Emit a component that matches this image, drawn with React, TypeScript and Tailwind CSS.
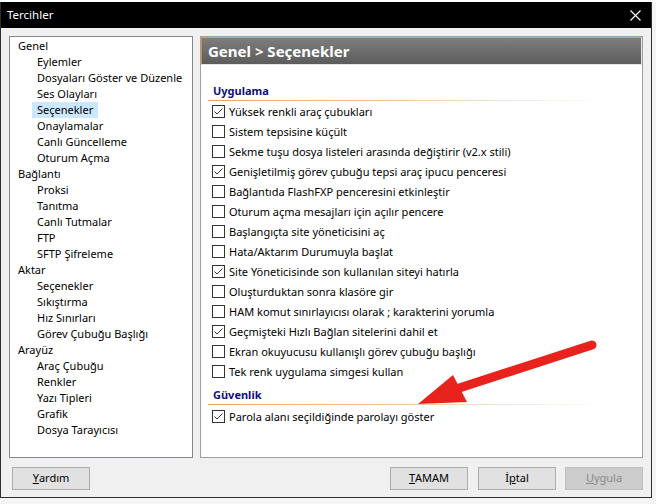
import React from "react";

const tree: { label: string; child?: boolean; active?: boolean }[] = [
  { label: "Genel" },
  { label: "Eylemler", child: true },
  { label: "Dosyaları Göster ve Düzenle", child: true },
  { label: "Ses Olayları", child: true },
  { label: "Seçenekler", child: true, active: true },
  { label: "Onaylamalar", child: true },
  { label: "Canlı Güncelleme", child: true },
  { label: "Oturum Açma", child: true },
  { label: "Bağlantı" },
  { label: "Proksi", child: true },
  { label: "Tanıtma", child: true },
  { label: "Canlı Tutmalar", child: true },
  { label: "FTP", child: true },
  { label: "SFTP Şifreleme", child: true },
  { label: "Aktar" },
  { label: "Seçenekler", child: true },
  { label: "Sıkıştırma", child: true },
  { label: "Hız Sınırları", child: true },
  { label: "Görev Çubuğu Başlığı", child: true },
  { label: "Arayüz" },
  { label: "Araç Çubuğu", child: true },
  { label: "Renkler", child: true },
  { label: "Yazı Tipleri", child: true },
  { label: "Grafik", child: true },
  { label: "Dosya Tarayıcısı", child: true },
];

const appOptions: [string, boolean][] = [
  ["Yüksek renkli araç çubukları", true],
  ["Sistem tepsisine küçült", false],
  ["Sekme tuşu dosya listeleri arasında değiştirir (v2.x stili)", false],
  ["Genişletilmiş görev çubuğu tepsi araç ipucu penceresi", true],
  ["Bağlantıda FlashFXP penceresini etkinleştir", false],
  ["Oturum açma mesajları için açılır pencere", false],
  ["Başlangıçta site yöneticisini aç", false],
  ["Hata/Aktarım Durumuyla başlat", false],
  ["Site Yöneticisinde son kullanılan siteyi hatırla", true],
  ["Oluşturduktan sonra klasöre gir", false],
  ["HAM komut sınırlayıcısı olarak ; karakterini yorumla", false],
  ["Geçmişteki Hızlı Bağlan sitelerini dahil et", true],
  ["Ekran okuyucusu kullanışlı görev çubuğu başlığı", false],
  ["Tek renk uygulama simgesi kullan", false],
];

function CheckBox({ checked }: { checked: boolean }) {
  return (
    <svg width="13" height="13" viewBox="0 0 13 13" className="shrink-0">
      <rect x="0.5" y="0.5" width="12" height="12" fill="#fff" stroke="#333" />
      {checked && (
        <polyline
          points="2.5,6.5 5,9 10.5,3.5"
          fill="none"
          stroke="#333"
          strokeWidth="1"
        />
      )}
    </svg>
  );
}

function Option({ label, checked }: { label: string; checked: boolean }) {
  return (
    <div className="flex h-[20px] items-center gap-[4px] whitespace-nowrap pl-[11px] text-[11px] text-black">
      <CheckBox checked={checked} />
      <span className="leading-none">{label}</span>
    </div>
  );
}

function SectionTitle({ label }: { label: string }) {
  return (
    <div>
      <div className="h-[16px] pl-[12px] text-[11px] font-bold leading-[16px] text-[#101080]">
        {label}
      </div>
      <div className="ml-[7px] mt-[1px] h-px w-[397px] bg-gradient-to-r from-[#eea25a] via-[#f3c9a0] to-transparent" />
    </div>
  );
}

function Button({
  children,
  disabled,
  className = "",
}: {
  children: React.ReactNode;
  disabled?: boolean;
  className?: string;
}) {
  return (
    <div
      className={
        "flex h-[23px] w-[78px] items-center justify-center border text-[11px] " +
        (disabled
          ? "border-[#bfbfbf] bg-[#cccccc] text-[#8a8a8a] "
          : "border-[#adadad] bg-[#e1e1e1] text-black ") +
        className
      }
    >
      {children}
    </div>
  );
}

export default function App() {
  return (
    <div
      className="relative h-[504px] w-[656px] overflow-hidden bg-[#f4f4f4]"
      style={{ fontFamily: '"Noto Sans", "Open Sans", sans-serif' }}
    >
      <div className="h-[2px] bg-white" />
      {/* dialog window */}
      <div className="flex h-[496px] w-[652px] flex-col border-x border-b border-[#2d2d2d] bg-[#f0f0f0]">
        <div className="flex h-[26px] items-center justify-between bg-black pl-[6px] pr-[10px] text-[11.5px] text-white">
          <span>Tercihler</span>
          <svg width="11" height="11" viewBox="0 0 11 11">
            <path d="M0.5 0.5 L10.5 10.5 M10.5 0.5 L0.5 10.5" stroke="#fff" strokeWidth="1.1" />
          </svg>
        </div>

        <div className="flex flex-1 flex-col px-[8px] pb-[7px] pt-[8px]">
          <div className="flex h-[422px] gap-[7px]">
            {/* category tree */}
            <div className="w-[184px] border border-[#828790] bg-white pt-[1px] text-[11px] text-black">
              {tree.map((t, i) => (
                <div
                  key={i}
                  className={"flex h-[16px] items-center whitespace-nowrap " + (t.child ? "pl-[22px]" : "pl-[8px]")}
                >
                  <span
                    className={
                      "h-[16px] leading-[16px] " +
                      (t.child ? "px-[5px] " : "") +
                      (t.active ? "bg-[#cce8ff]" : "")
                    }
                  >
                    {t.label}
                  </span>
                </div>
              ))}
            </div>

            {/* settings page */}
            <div className="flex w-[443px] flex-col border border-[#a0a0a0] bg-white">
              <div className="flex h-[28px] items-center border-l border-t border-b border-r border-l-[#c98a4e] border-t-[#d9a26a] border-b-[#e6e6e6] border-r-[#e6e6e6] bg-gradient-to-b from-[#7e7e7e] to-[#5c5c5c] pl-[6px] text-[15px] font-bold text-white">
                Genel &gt; Seçenekler
              </div>
              <div className="mt-[18px]">
                <SectionTitle label="Uygulama" />
                {appOptions.map(([label, checked], i) => (
                  <Option key={i} label={label} checked={checked} />
                ))}
              </div>
              <div className="mt-[6px]">
                <SectionTitle label="Güvenlik" />
                <div className="mt-[1px]">
                  <Option label="Parola alanı seçildiğinde parolayı göster" checked />
                </div>
              </div>
            </div>
          </div>

          <div className="mt-[9px] flex items-center">
            <Button className="ml-[3px]">
              <span className="underline">Y</span>ardım
            </Button>
            <div className="flex-1" />
            <Button>
              <span className="underline">T</span>AMAM
            </Button>
            <Button className="ml-[10px]">
              İ<span className="underline">p</span>tal
            </Button>
            <Button disabled className="ml-[9px]">
              <span className="underline">U</span>ygula
            </Button>
          </div>
        </div>
      </div>

      {/* annotation arrow */}
      <svg className="pointer-events-none absolute left-0 top-0" width="656" height="504" viewBox="0 0 656 504">
        <line x1="592" y1="345" x2="450" y2="391" stroke="#e8231d" strokeWidth="9" strokeLinecap="round" />
        <polygon points="418,404 453,375 467,402" fill="#e8231d" />
      </svg>
    </div>
  );
}
